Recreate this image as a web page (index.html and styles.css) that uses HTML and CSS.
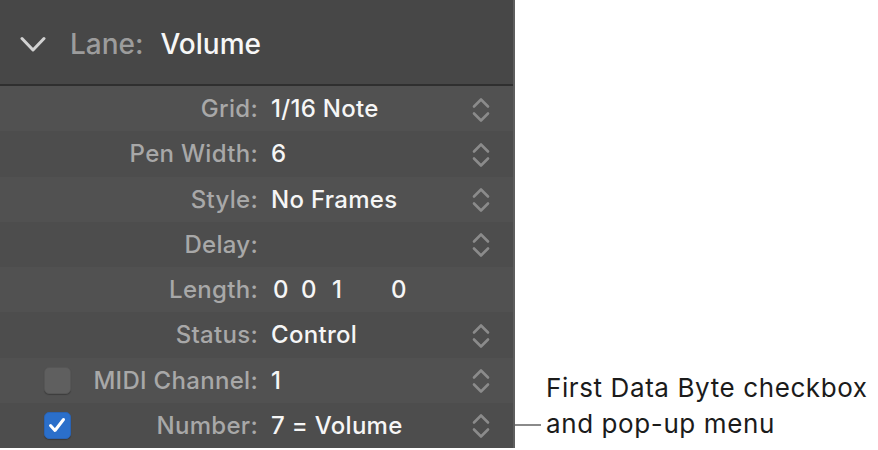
FILE: index.html
```html
<!DOCTYPE html>
<html>
<head>
<meta charset="utf-8">
<link rel="stylesheet" href="styles.css">
</head>
<body>
<div class="page">
  <div class="panel">
    <div class="header">
      <svg class="disclosure" width="26" height="17" viewBox="0 0 26 17"><polyline points="2,2.5 13,14 24,2.5" fill="none" stroke="#d2d2d2" stroke-width="3" stroke-linecap="round" stroke-linejoin="round"/></svg>
      <span class="lane-label">Lane:</span>
      <span class="lane-value">Volume</span>
    </div>
    <div class="row light">
      <div class="label"><span class="text">Grid:</span></div>
      <div class="value">1/16 Note</div>
      <svg class="stepper" width="18" height="26" viewBox="0 0 18 26"><polyline points="2,9.5 9,2.5 16,9.5" /><polyline points="2,16.5 9,23.5 16,16.5" /></svg>
    </div>
    <div class="row dark">
      <div class="label"><span class="text">Pen Width:</span></div>
      <div class="value">6</div>
      <svg class="stepper" width="18" height="26" viewBox="0 0 18 26"><polyline points="2,9.5 9,2.5 16,9.5" /><polyline points="2,16.5 9,23.5 16,16.5" /></svg>
    </div>
    <div class="row light">
      <div class="label"><span class="text">Style:</span></div>
      <div class="value">No Frames</div>
      <svg class="stepper" width="18" height="26" viewBox="0 0 18 26"><polyline points="2,9.5 9,2.5 16,9.5" /><polyline points="2,16.5 9,23.5 16,16.5" /></svg>
    </div>
    <div class="row dark">
      <div class="label"><span class="text">Delay:</span></div>
      <div class="value"></div>
      <svg class="stepper" width="18" height="26" viewBox="0 0 18 26"><polyline points="2,9.5 9,2.5 16,9.5" /><polyline points="2,16.5 9,23.5 16,16.5" /></svg>
    </div>
    <div class="row light">
      <div class="label"><span class="text">Length:</span></div>
      <div class="value length"><span class="seg s1">0</span><span class="seg s2">0</span><span class="seg s3">1</span><span class="seg">0</span></div>
      <span class="stepper-blank"></span>
    </div>
    <div class="row dark">
      <div class="label"><span class="text">Status:</span></div>
      <div class="value">Control</div>
      <svg class="stepper" width="18" height="26" viewBox="0 0 18 26"><polyline points="2,9.5 9,2.5 16,9.5" /><polyline points="2,16.5 9,23.5 16,16.5" /></svg>
    </div>
    <div class="row light">
      <div class="label"><span class="checkbox"></span><span class="text">MIDI Channel:</span></div>
      <div class="value">1</div>
      <svg class="stepper" width="18" height="26" viewBox="0 0 18 26"><polyline points="2,9.5 9,2.5 16,9.5" /><polyline points="2,16.5 9,23.5 16,16.5" /></svg>
    </div>
    <div class="row dark">
      <div class="label"><span class="checkbox checked"><svg width="26" height="26" viewBox="0 0 26 26"><polyline points="6.5,13.5 11,18.5 19.5,7.5" fill="none" stroke="#ffffff" stroke-width="3" stroke-linecap="round" stroke-linejoin="round"/></svg></span><span class="text">Number:</span></div>
      <div class="value">7 = Volume</div>
      <svg class="stepper" width="18" height="26" viewBox="0 0 18 26"><polyline points="2,9.5 9,2.5 16,9.5" /><polyline points="2,16.5 9,23.5 16,16.5" /></svg>
    </div>
  </div>
  <div class="callout">
    <div class="callout-line">First Data Byte checkbox</div>
    <div class="callout-line second"><span class="leader"></span><span>and pop-up menu</span></div>
  </div>
</div>
</body>
</html>
```

FILE: styles.css
```css
* { box-sizing: border-box; }
html, body { margin: 0; padding: 0; background: #ffffff; }
body { font-family: Inter, "Noto Sans", "Liberation Sans", sans-serif; }

.page {
  display: flex;
  align-items: flex-end;
  width: 878px;
  height: 450px;
}

.panel {
  width: 515px;
  height: 448px;
  align-self: flex-start;
  background: #4f4f4f;
  border-right: 2px solid #5e5e5e;
  display: flex;
  flex-direction: column;
}

.header {
  height: 86px;
  flex: none;
  background: #474747;
  border-bottom: 2px solid #2f2f2f;
  display: flex;
  align-items: center;
  padding-left: 20px;
  padding-top: 3px;
  font-size: 28px;
  font-weight: 500;
}
.disclosure { margin-right: 24px; margin-top: 1px; }
.lane-label { color: #9c9c9c; margin-right: 17px; }
.lane-value { color: #f7f7f7; }

.row {
  height: 45.25px;
  flex: none;
  display: grid;
  grid-template-columns: 258px 1fr 18px;
  column-gap: 13px;
  align-items: center;
  padding-right: 23px;
  font-size: 24px;
  font-weight: 500;
  letter-spacing: 0.3px;
}
.row.light { background: #515151; }
.row.dark { background: #4d4d4d; }

.label {
  display: flex;
  align-items: center;
  padding-left: 44px;
  color: #a8a8a8;
}
.label .text { margin-left: auto; }
.value { color: #f6f6f6; white-space: nowrap; }

.stepper { display: block; margin-top: 2px; }
.stepper polyline {
  fill: none;
  stroke: #8b8b8b;
  stroke-width: 2.6;
  stroke-linecap: round;
  stroke-linejoin: round;
}
.stepper-blank { display: block; width: 18px; }

.length { display: flex; padding-left: 2px; }
.seg { display: inline-block; }
.s1 { width: 28px; }
.s2 { width: 31px; }
.s3 { width: 59px; }

.checkbox {
  width: 27px;
  height: 27px;
  border-radius: 5px;
  background: #5f5f5f;
  border: 1px solid #565656;
  box-shadow: 0 1px 1px rgba(0,0,0,0.25);
  display: block;
}
.checkbox.checked {
  background: #2b6fca;
  border-color: #2a63b3;
}
.checkbox svg { display: block; margin: -1px; }

.callout {
  flex: 1;
  padding-bottom: 8px;
  font-size: 26px;
  letter-spacing: 0.6px;
  color: #1b1b1b;
  line-height: 36px;
}
.callout-line { padding-left: 31px; white-space: nowrap; }
.callout-line.second {
  padding-left: 0;
  display: flex;
  align-items: center;
}
.leader {
  display: block;
  width: 26px;
  height: 2px;
  background: #8a8a8a;
  margin-right: 5px;
  margin-top: 2px;
}
```
